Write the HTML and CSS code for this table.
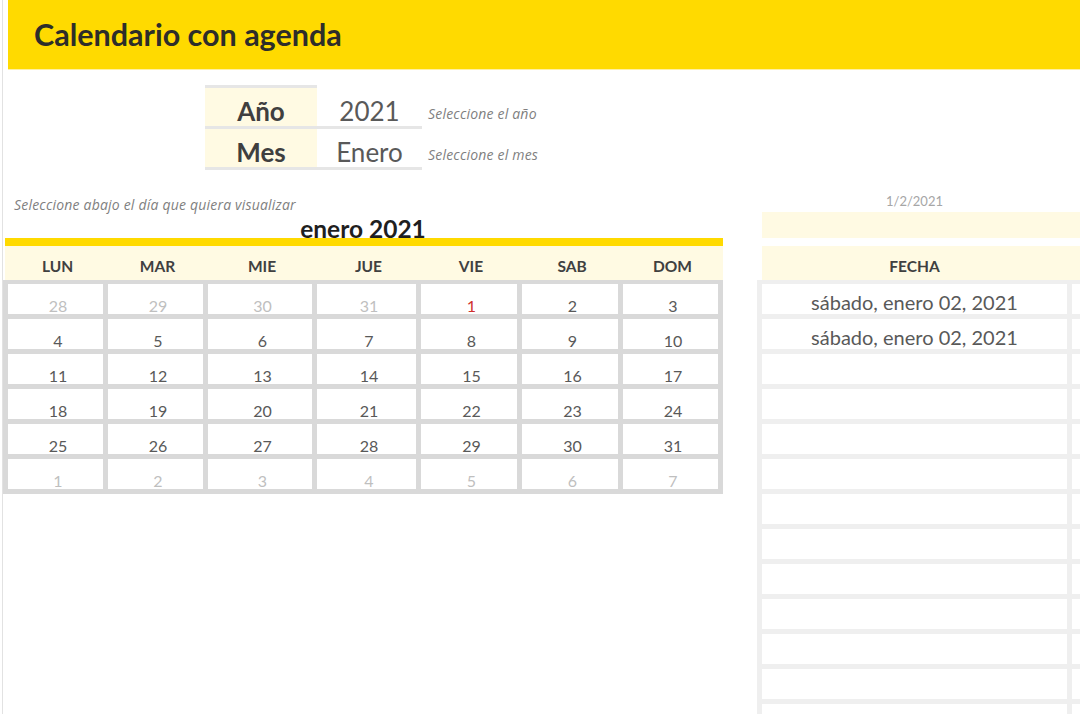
FILE: index.html
```html
<!DOCTYPE html>
<html lang="es">
<head>
<meta charset="utf-8">
<title>Calendario con agenda</title>
<link rel="stylesheet" href="styles.css">
</head>
<body>
<div class="page">
  <header class="banner"><h1>Calendario con agenda</h1></header>

  <section class="settings">
    <div class="set-row">
      <div class="field"><div class="lab lab-first">Año</div><div class="val">2021</div></div>
      <span class="hint">Seleccione el año</span>
    </div>
    <div class="set-row">
      <div class="field"><div class="lab">Mes</div><div class="val">Enero</div></div>
      <span class="hint">Seleccione el mes</span>
    </div>
  </section>

  <main class="main">
    <section class="cal">
      <div class="note">Seleccione abajo el día que quiera visualizar</div>
      <div class="cal-title">enero 2021</div>
      <div class="cal-bar"></div>
      <div class="weekdays">
        <div>LUN</div><div>MAR</div><div>MIE</div><div>JUE</div><div>VIE</div><div>SAB</div><div>DOM</div>
      </div>
      <div class="days">
        <div class="day muted">28</div><div class="day muted">29</div><div class="day muted">30</div><div class="day muted">31</div><div class="day today">1</div><div class="day">2</div><div class="day">3</div>
        <div class="day">4</div><div class="day">5</div><div class="day">6</div><div class="day">7</div><div class="day">8</div><div class="day">9</div><div class="day">10</div>
        <div class="day">11</div><div class="day">12</div><div class="day">13</div><div class="day">14</div><div class="day">15</div><div class="day">16</div><div class="day">17</div>
        <div class="day">18</div><div class="day">19</div><div class="day">20</div><div class="day">21</div><div class="day">22</div><div class="day">23</div><div class="day">24</div>
        <div class="day">25</div><div class="day">26</div><div class="day">27</div><div class="day">28</div><div class="day">29</div><div class="day">30</div><div class="day">31</div>
        <div class="day muted">1</div><div class="day muted">2</div><div class="day muted">3</div><div class="day muted">4</div><div class="day muted">5</div><div class="day muted">6</div><div class="day muted">7</div>
      </div>
    </section>

    <section class="agenda">
      <div class="ag-date"><span>1/2/2021</span></div>
      <div class="ag-band"></div>
      <div class="ag-head"><span>FECHA</span></div>
      <div class="ag-grid">
        <div class="ag-cell">sábado, enero 02, 2021</div><div class="ag-cell"></div>
        <div class="ag-cell">sábado, enero 02, 2021</div><div class="ag-cell"></div>
        <div class="ag-cell"></div><div class="ag-cell"></div>
        <div class="ag-cell"></div><div class="ag-cell"></div>
        <div class="ag-cell"></div><div class="ag-cell"></div>
        <div class="ag-cell"></div><div class="ag-cell"></div>
        <div class="ag-cell"></div><div class="ag-cell"></div>
        <div class="ag-cell"></div><div class="ag-cell"></div>
        <div class="ag-cell"></div><div class="ag-cell"></div>
        <div class="ag-cell"></div><div class="ag-cell"></div>
        <div class="ag-cell"></div><div class="ag-cell"></div>
        <div class="ag-cell"></div><div class="ag-cell"></div>
        <div class="ag-cell"></div><div class="ag-cell"></div>
      </div>
    </section>
  </main>
</div>
</body>
</html>
```

FILE: styles.css
```css
html, body {
  margin: 0;
  padding: 0;
  height: 100%;
  overflow: hidden;
  background: #ffffff;
  font-family: Lato, "Open Sans", "DejaVu Sans", sans-serif;
}

.page {
  margin-left: 2px;
  border-left: 1px solid #e2e2e2;
  min-height: 714px;
  overflow: hidden;
}

/* Banner */
.banner {
  margin-left: 5px;
  height: 69px;
  background: #ffda00;
  border-bottom: 1px solid #fff0a0;
  display: flex;
  align-items: center;
  padding-left: 26px;
}
.banner h1 {
  margin: 0;
  font-size: 30.5px;
  line-height: 1;
  font-weight: 700;
  color: #2d2d2a;
}

/* Year / month selector */
.settings {
  margin: 15px 0 0 202px;
}
.set-row {
  display: flex;
  align-items: flex-end;
}
.field {
  display: flex;
  border-bottom: 3px solid #e6e6e6;
}
.lab {
  width: 112px;
  height: 38px;
  background: #fffae3;
  display: flex;
  align-items: flex-end;
  justify-content: center;
  padding-bottom: 2px;
  box-sizing: border-box;
  font-size: 26px;
  line-height: 1;
  font-weight: 700;
  color: #3f3f3f;
}
.lab-first {
  border-top: 3px solid #e6e6e6;
  height: 41px;
}
.val {
  width: 105px;
  display: flex;
  align-items: flex-end;
  justify-content: center;
  padding-bottom: 2px;
  box-sizing: border-box;
  font-size: 26px;
  line-height: 1;
  color: #595959;
}
.hint {
  margin: 0 0 8px 6px;
  font-family: "Open Sans", Lato, sans-serif;
  font-size: 14px;
  letter-spacing: 0.2px;
  line-height: 1;
  font-style: italic;
  color: #7f7f7f;
}

/* Main area */
.main {
  margin-top: 20px;
  display: flex;
  gap: 34px;
  align-items: flex-start;
}

/* Calendar */
.cal {
  width: 720px;
  flex: none;
}
.note {
  height: 22px;
  display: flex;
  align-items: flex-end;
  padding-left: 11px;
  font-family: "Open Sans", Lato, sans-serif;
  font-size: 14px;
  letter-spacing: 0.2px;
  line-height: 1;
  font-style: italic;
  color: #7f7f7f;
}
.cal-title {
  height: 26px;
  box-sizing: border-box;
  padding-top: 4px;
  text-align: center;
  font-size: 24.5px;
  line-height: 26px;
  font-weight: 700;
  color: #1f1f1f;
}
.cal-bar {
  margin-left: 2px;
  height: 8px;
  background: #ffda00;
}
.weekdays {
  margin-left: 2px;
  height: 34px;
  background: #fffae3;
  display: grid;
  grid-template-columns: 95px 95px 104px 99px 96px 96px 95px;
  column-gap: 5px;
  padding-left: 5px;
  box-sizing: border-box;
}
.weekdays div {
  display: flex;
  align-items: flex-end;
  justify-content: center;
  padding-bottom: 6px;
  font-size: 15.5px;
  line-height: 1;
  font-weight: 700;
  color: #404040;
}
.days {
  background: #d9d9d9;
  padding: 4px 5px 5px;
  display: grid;
  grid-template-columns: 95px 95px 104px 99px 96px 96px 95px;
  grid-auto-rows: 30px;
  gap: 5px;
}
.day {
  background: #ffffff;
  display: flex;
  align-items: flex-end;
  justify-content: center;
  padding-left: 5px;
  font-size: 16px;
  line-height: 1;
  color: #595959;
}
.day.muted {
  color: #bfbfbf;
}
.day.today {
  color: #d0312d;
}

/* Agenda */
.agenda {
  width: 340px;
  flex: none;
}
.ag-date {
  height: 22px;
  box-sizing: border-box;
  padding: 0 0 4px 5px;
  display: flex;
  align-items: flex-end;
}
.ag-date span {
  width: 305px;
  text-align: center;
  font-size: 13px;
  line-height: 1;
  color: #a6a6a6;
}
.ag-band {
  margin-left: 5px;
  height: 26px;
  background: #fffae3;
}
.ag-head {
  margin: 8px 0 0 5px;
  height: 34px;
  background: #fffae3;
  display: flex;
  align-items: flex-end;
  box-sizing: border-box;
  padding-bottom: 6px;
}
.ag-head span {
  width: 305px;
  text-align: center;
  font-size: 15.5px;
  line-height: 1;
  font-weight: 700;
  color: #404040;
}
.ag-grid {
  background: #efefef;
  padding: 4px 0 0 5px;
  display: grid;
  grid-template-columns: 305px 200px;
  grid-auto-rows: 30px;
  gap: 5px;
}
.ag-cell {
  background: #ffffff;
  display: flex;
  align-items: flex-end;
  justify-content: center;
  padding-bottom: 2px;
  box-sizing: border-box;
  font-size: 20px;
  line-height: 1;
  color: #595959;
}
```
